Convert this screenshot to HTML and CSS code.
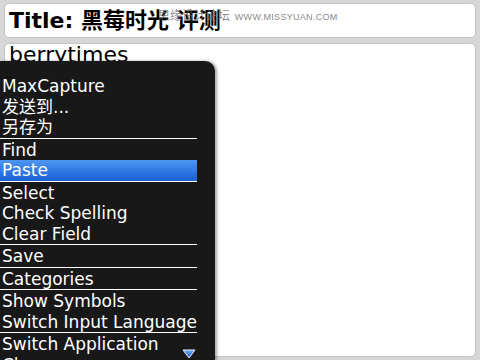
FILE: index.html
```
<!DOCTYPE html>
<html lang="zh-CN">
<head>
    <meta charset="UTF-8">
    <meta name="viewport" content="width=device-width, initial-scale=1.0">
    <title>berrytimes</title>
    <link rel="stylesheet" href="styles.css">
</head>
<body>
    <div class="screen">
        <div class="field title-field">
            <span class="title-text">Title: 黑莓时光 评测</span>
        </div>
        <div class="field body-field">
            <span class="body-text">berrytimes</span>
        </div>

        <!-- 水印 -->
        <div class="watermark">思缘设计论坛 <span class="wm-url">WWW.MISSYUAN.COM</span></div>

        <!-- 弹出菜单 -->
        <div class="menu">
            <ul class="menu-list">
                <li>MaxCapture</li>
                <li>发送到...</li>
                <li>另存为</li>
                <li class="sep"></li>
                <li>Find</li>
                <li class="selected">Paste</li>
                <li class="sep"></li>
                <li>Select</li>
                <li>Check Spelling</li>
                <li>Clear Field</li>
                <li class="sep"></li>
                <li>Save</li>
                <li class="sep"></li>
                <li>Categories</li>
                <li class="sep"></li>
                <li>Show Symbols</li>
                <li>Switch Input Language</li>
                <li class="sep"></li>
                <li>Switch Application</li>
                <li>Close</li>
            </ul>
            <svg class="more-arrow" width="14" height="10" viewBox="0 0 14 10">
                <defs>
                    <linearGradient id="arrowFill" x1="0" y1="0" x2="0" y2="1">
                        <stop offset="0" stop-color="#6fa8f0"/>
                        <stop offset="1" stop-color="#1d5fd0"/>
                    </linearGradient>
                </defs>
                <polygon points="1,1 13,1 7,9" fill="url(#arrowFill)" stroke="#e8f0ff" stroke-width="1"/>
            </svg>
        </div>
    </div>
</body>
</html>
```

FILE: styles.css
```
body {
    margin: 0;
    background: #d6d6d6;
    font-family: "DejaVu Sans", "Noto Sans CJK SC", sans-serif;
}
.screen {
    position: relative;
    width: 480px;
    height: 360px;
    overflow: hidden;
    padding: 3px 4px 0 4px;
    box-sizing: border-box;
    display: flex;
    flex-direction: column;
    gap: 5px;
}
.field {
    background: #fff;
    border: 1px solid #c4c4c4;
    border-radius: 5px;
    box-sizing: border-box;
}
.title-field {
    height: 35px;
    padding: 0 4px;
}
.title-text {
    font-weight: bold;
    font-size: 22px;
    line-height: 33px;
    color: #000;
}
.body-field {
    flex: 1;
    margin-bottom: 3px;
    padding: 0 4px;
}
.body-text {
    font-size: 22px;
    line-height: 22px;
    color: #000;
}
.watermark {
    position: absolute;
    left: 158px;
    top: 6px;
    font-size: 12px;
    color: rgba(110, 110, 110, 0.8);
    white-space: nowrap;
}
.wm-url {
    font-family: "Liberation Sans", sans-serif;
    font-size: 9px;
    color: #8a8a8a;
    letter-spacing: 0.3px;
    margin-left: 1px;
}
.menu {
    position: absolute;
    left: 0;
    top: 61px;
    bottom: 0;
    width: 215px;
    background: #181818;
    border-top-right-radius: 10px;
    box-shadow: 2px 0 3px rgba(0, 0, 0, 0.35);
}
.menu-list {
    list-style: none;
    margin: 0;
    padding: 15px 0 0 0;
    width: 197px;
}
.menu-list li {
    color: #fff;
    font-size: 17px;
    line-height: 20.5px;
    height: 20.5px;
    padding-left: 2px;
    white-space: nowrap;
}
.menu-list li.sep {
    height: 1px;
    background: #fff;
    margin: 0 0 1px 0;
    padding: 0;
}
.menu-list li.selected {
    background: linear-gradient(#4c97f2, #1a5fd4);
}
.more-arrow {
    position: absolute;
    left: 182px;
    top: 288px;
}
```
